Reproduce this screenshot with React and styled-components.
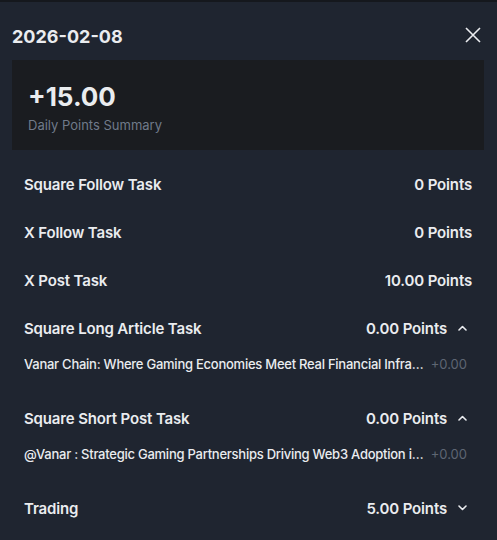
import React from 'react'
import styled, { createGlobalStyle } from 'styled-components'

const GlobalStyle = createGlobalStyle`
  html, body {
    margin: 0;
    padding: 0;
    background: #1f2530;
  }
  body {
    font-family: Inter, "Noto Sans", sans-serif;
    -webkit-font-smoothing: antialiased;
  }
`

const tasks = [
   { name: 'Square Follow Task', points: '0 Points' },
   { name: 'X Follow Task', points: '0 Points' },
   { name: 'X Post Task', points: '10.00 Points' },
   {
      name: 'Square Long Article Task',
      points: '0.00 Points',
      open: true,
      items: [{ title: 'Vanar Chain: Where Gaming Economies Meet Real Financial Infrastructure', value: '+0.00' }],
   },
   {
      name: 'Square Short Post Task',
      points: '0.00 Points',
      open: true,
      items: [{ title: '@Vanar : Strategic Gaming Partnerships Driving Web3 Adoption in 2026', value: '+0.00' }],
   },
   { name: 'Trading', points: '5.00 Points', open: false, items: [] },
]

function Chevron({ up }) {
   return (
      <svg width="9" height="6" viewBox="0 0 9 6" fill="none">
         <path
            d={up ? 'M1 5 L4.5 1.5 L8 5' : 'M1 1 L4.5 4.5 L8 1'}
            stroke="#eaecef"
            strokeWidth="1.6"
            strokeLinecap="round"
            strokeLinejoin="round"
         />
      </svg>
   )
}

export default function App() {
   return (
      <>
         <GlobalStyle />
         <Panel>
            <Header>
               <Title>2026-02-08</Title>
               <CloseBtn type="button" aria-label="close">
                  <svg width="16" height="16" viewBox="0 0 16 16" fill="none">
                     <path d="M1 1 L15 15 M15 1 L1 15" stroke="#eaecef" strokeWidth="1.6" />
                  </svg>
               </CloseBtn>
            </Header>

            <Summary>
               <Total>+15.00</Total>
               <Caption>Daily Points Summary</Caption>
            </Summary>

            <TaskList>
               {tasks.map((t) => (
                  <li key={t.name}>
                     <TaskRow>
                        <TaskName>{t.name}</TaskName>
                        <TaskPoints>
                           {t.points}
                           {t.items && (
                              <ChevronBox>
                                 <Chevron up={t.open} />
                              </ChevronBox>
                           )}
                        </TaskPoints>
                     </TaskRow>
                     {t.open && (
                        <SubList>
                           {t.items.map((it) => (
                              <SubRow key={it.title}>
                                 <SubTitle>{it.title}</SubTitle>
                                 <SubValue>{it.value}</SubValue>
                              </SubRow>
                           ))}
                        </SubList>
                     )}
                  </li>
               ))}
            </TaskList>
         </Panel>
      </>
   )
}

const Panel = styled.div`
  width: 497px;
  height: 540px;
  box-sizing: border-box;
  border-top: 2px solid #15181d;
  background: #1f2530;
  color: #eaecef;
  overflow: hidden;
  padding: 0 13px 0 12px;
`

const Header = styled.div`
  display: flex;
  justify-content: space-between;
  align-items: center;
  padding: 21px 3px 9px 0;
`

const Title = styled.h2`
  margin: 0;
  font-size: 18px;
  line-height: 28px;
  font-weight: 700;
  color: #eaecef;
`

const CloseBtn = styled.button`
  background: transparent;
  border: 0;
  padding: 0;
  display: flex;
  cursor: pointer;
  margin-top: -4px;
`

const Summary = styled.div`
  background: #1a1c20;
  height: 90px;
  box-sizing: border-box;
  padding: 21px 16px 16px;
`

const Total = styled.div`
  font-size: 26px;
  line-height: 32px;
  font-weight: 700;
  color: #eaecef;
`

const Caption = styled.div`
  margin-top: 3px;
  font-size: 13px;
  line-height: 18px;
  color: #707a8a;
`

const TaskList = styled.ul`
  list-style: none;
  margin: 10px 0 0;
  padding: 0 12px;
`

const TaskRow = styled.div`
  height: 48px;
  display: flex;
  align-items: center;
  justify-content: space-between;
`

const TaskName = styled.span`
  font-size: 15px;
  font-weight: 600;
  letter-spacing: -0.15px;
`

const TaskPoints = styled.span`
  display: flex;
  align-items: center;
  font-size: 15px;
  font-weight: 600;
  letter-spacing: -0.15px;
`

const ChevronBox = styled.span`
  display: flex;
  align-items: center;
  margin-left: 11px;
  margin-right: 5px;
`

const SubList = styled.div`
  padding: 0 5px 18px 0;
`

const SubRow = styled.div`
  height: 24px;
  display: flex;
  align-items: center;
  font-size: 13px;
`

const SubTitle = styled.span`
  flex: 1;
  min-width: 0;
  white-space: nowrap;
  overflow: hidden;
  text-overflow: ellipsis;
  font-weight: 500;
  letter-spacing: -0.25px;
`

const SubValue = styled.span`
  color: #5e6673;
  flex-shrink: 0;
  margin-left: 1px;
`
